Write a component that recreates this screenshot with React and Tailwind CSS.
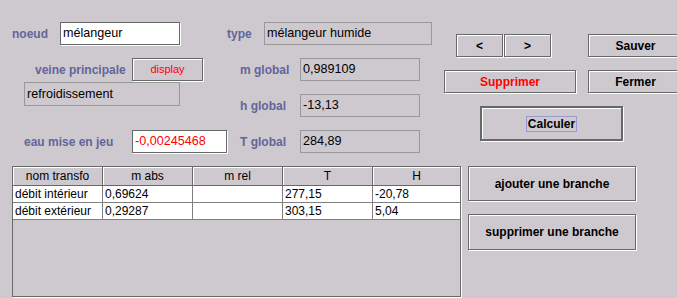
import React from 'react';

const bevel = 'border border-[#666a66] shadow-[inset_1px_1px_0_#fff,1px_1px_0_#fff]';

const Label = ({ children, className = '' }) => (
  <span className={`font-bold text-[12px] text-[#62659a] whitespace-nowrap ${className}`}>{children}</span>
);

const Field = ({ w, h = 'h-[23px]', value, editable, red }) => (
  <div
    className={`${w} ${h} shrink-0 flex items-center pl-[2px] text-[12.6px] whitespace-nowrap overflow-hidden ${
      editable ? `bg-white ${bevel}` : 'border border-[#999999]'
    } ${red ? 'text-[#ff0000]' : 'text-black'}`}
  >
    {value}
  </div>
);

const Btn = ({ w, h = 'h-[23px]', children, className = '' }) => (
  <button
    className={`${w} ${h} shrink-0 flex items-center justify-center font-bold text-[12px] text-black ${bevel} ${className}`}
  >
    {children}
  </button>
);

const columns = [
  { key: 'nom', label: 'nom transfo', w: 'w-[90px]' },
  { key: 'mabs', label: 'm abs', w: 'w-[90px]' },
  { key: 'mrel', label: 'm rel', w: 'w-[90px]' },
  { key: 't', label: 'T', w: 'w-[90px]' },
  { key: 'h', label: 'H', w: 'flex-1' },
];

const rows = [
  { nom: 'débit intérieur', mabs: '0,69624', mrel: '', t: '277,15', h: '-20,78' },
  { nom: 'débit extérieur', mabs: '0,29287', mrel: '', t: '303,15', h: '5,04' },
];

export default function App() {
  return (
    <div className="w-[677px] h-[298px] overflow-hidden bg-[#cec9cf] font-['Liberation_Sans',Arial,sans-serif]">
      <div className="flex h-[166px]">
        {/* left column */}
        <div className="w-[227px] shrink-0 flex flex-col">
          <div className="mt-[22px] h-[23px] flex items-center">
            <Label className="pl-[12px] w-[60px]">noeud</Label>
            <Field w="w-[120px]" value="mélangeur" editable />
          </div>
          <div className="mt-[13px] h-[23px] flex items-center">
            <Label className="pl-[35px] w-[132px]">veine principale</Label>
            <Btn w="w-[71px]" className="!font-normal !text-[11px] !text-[#ff0000]">display</Btn>
          </div>
          <div className="mt-[1px] ml-[24px]">
            <Field w="w-[156px]" h="h-[24px]" value="refroidissement" />
          </div>
          <div className="mt-[24px] h-[23px] flex items-center">
            <Label className="pl-[24px] w-[132px]">eau mise en jeu</Label>
            <Field w="w-[95px]" value="-0,00245468" editable red />
          </div>
        </div>

        {/* middle column */}
        <div className="w-[217px] shrink-0 flex flex-col">
          <div className="mt-[22px] h-[23px] flex items-center">
            <Label className="w-[37px]">type</Label>
            <Field w="w-[168px]" value="mélangeur humide" />
          </div>
          {[
            ['m global', '0,989109'],
            ['h global', '-13,13'],
            ['T global', '284,89'],
          ].map(([label, value]) => (
            <div key={label} className="mt-[13px] h-[23px] flex items-center">
              <Label className="pl-[13px] w-[73px]">{label}</Label>
              <Field w="w-[120px]" value={value} />
            </div>
          ))}
        </div>

        {/* right column */}
        <div className="flex-1 flex flex-col">
          <div className="mt-[34px] flex">
            <Btn w="w-[47px]" className="ml-[12px]">&lt;</Btn>
            <Btn w="w-[47px]" className="ml-[1px]">&gt;</Btn>
            <Btn w="w-[95px]" className="ml-[37px]">Sauver</Btn>
          </div>
          <div className="mt-[13px] flex">
            <Btn w="w-[132px]" className="!text-[#ff0000]">Supprimer</Btn>
            <Btn w="w-[95px]" className="ml-[12px]">Fermer</Btn>
          </div>
          <div className="mt-[13px] ml-[36px]">
            <button className="w-[143px] h-[35px] flex items-center justify-center border-2 border-[#666a66] shadow-[inset_1px_1px_0_#fff,1px_1px_0_#fff]">
              <span className="px-[1px] border border-[#9a9ad0] font-bold text-[12px] text-black leading-[14px]">
                Calculer
              </span>
            </button>
          </div>
        </div>
      </div>

      <div className="flex">
        {/* table */}
        <div className="ml-[12px] w-[449px] h-[131px] shrink-0 flex flex-col border border-[#666a66] shadow-[1px_1px_0_#fff]">
          <div className="flex h-[19px] shrink-0 border-b border-[#666a66]">
            {columns.map((c) => (
              <div
                key={c.key}
                className={`${c.w} flex items-center justify-center text-[12px] text-black border-r border-[#666a66] shadow-[inset_1px_1px_0_#fff] last:border-r-0`}
              >
                {c.label}
              </div>
            ))}
          </div>
          {rows.map((r) => (
            <div key={r.nom} className="flex h-[17px] shrink-0 bg-white border-b border-[#808080]">
              {columns.map((c) => (
                <div
                  key={c.key}
                  className={`${c.w} flex items-center pl-[2px] text-[12px] text-black border-r border-[#808080] whitespace-nowrap overflow-hidden last:border-r-0`}
                >
                  {r[c.key]}
                </div>
              ))}
            </div>
          ))}
        </div>

        {/* side buttons */}
        <div className="ml-[7px] flex flex-col">
          <Btn w="w-[168px]" h="h-[35px]">ajouter une branche</Btn>
          <Btn w="w-[168px]" h="h-[36px]" className="mt-[13px]">supprimer une branche</Btn>
        </div>
      </div>
    </div>
  );
}
